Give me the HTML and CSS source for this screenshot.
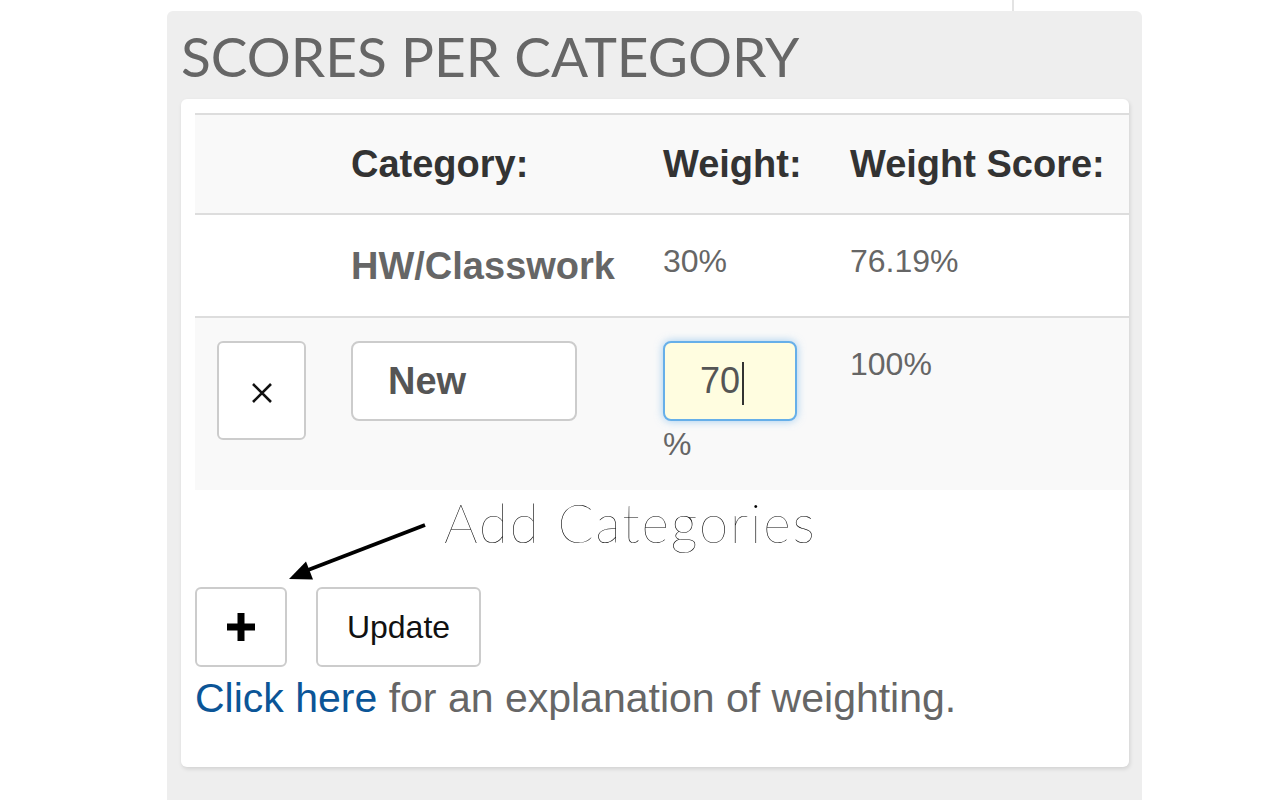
FILE: index.html
```html
<!DOCTYPE html>
<html lang="en">
<head>
<meta charset="utf-8">
<title>Scores per category</title>
<link rel="stylesheet" href="styles.css">
</head>
<body>
<div class="topbar"><div class="rule"></div></div>
<section class="panel">
  <h2 class="panel-title">SCORES PER CATEGORY</h2>
  <div class="card">
    <table class="scores">
      <colgroup><col class="c1"><col class="c2"><col class="c3"><col class="c4"></colgroup>
      <thead>
        <tr><th></th><th>Category:</th><th>Weight:</th><th>Weight Score:</th></tr>
      </thead>
      <tbody>
        <tr class="row-existing">
          <td></td>
          <th class="cat">HW/Classwork</th>
          <td>30%</td>
          <td>76.19%</td>
        </tr>
        <tr class="row-new">
          <td>
            <button class="btn btn-remove" type="button" aria-label="Remove">
              <svg width="22" height="22" viewBox="0 0 22 22"><path d="M2 2L20 20M20 2L2 20" stroke="#111" stroke-width="2.6" fill="none"/></svg>
            </button>
          </td>
          <td><div class="field field-name">New</div></td>
          <td><div class="field field-weight is-focus">70<span class="caret"></span></div><span class="unit">%</span></td>
          <td>100%</td>
        </tr>
      </tbody>
    </table>
    <div class="callout">
      <span class="callout-text">Add Categories</span>
      <svg class="callout-arrow" width="260" height="97" viewBox="0 0 260 97">
        <path d="M230 35L113 80" stroke="#000" stroke-width="4" fill="none"/>
        <path d="M94 89L111 71.5L118 89.5Z" fill="#000"/>
      </svg>
    </div>
    <div class="actions">
      <button class="btn btn-add" type="button" aria-label="Add">
        <svg width="30" height="30" viewBox="0 0 30 30"><path d="M11.5 1h7v10.5H29v7H18.5V29h-7V18.5H1v-7h10.5z" fill="#000"/></svg>
      </button>
      <button class="btn btn-update" type="button">Update</button>
    </div>
    <p class="note"><a href="#" class="note-link">Click here</a> for an explanation of weighting.</p>
  </div>
</section>
</body>
</html>
```
FILE: styles.css
```css
html, body {
  margin: 0;
  padding: 0;
  background: #fff;
  font-family: "Liberation Sans", Arial, sans-serif;
  overflow: hidden;
}

.topbar {
  height: 11px;
}
.rule {
  margin-left: 1012px;
  width: 2px;
  height: 11px;
  background: #e3e3e3;
}

.panel {
  box-sizing: border-box;
  margin-left: 167px;
  width: 975px;
  min-height: 789px;
  padding: 12px 13px 0 14px;
  background: #eeeeee;
  border-radius: 6px 6px 0 0;
}

.panel-title {
  margin: 0 0 10px;
  font-family: Lato, "Liberation Sans", sans-serif;
  font-weight: 400;
  font-size: 55px;
  line-height: 66px;
  color: #666;
}

.card {
  background: #fff;
  border-radius: 6px;
  padding: 14px 0 14px 14px;
  box-shadow: 1px 2px 4px rgba(0, 0, 0, 0.12);
  overflow: hidden;
}

.scores {
  width: 100%;
  table-layout: fixed;
  border-collapse: separate;
  border-spacing: 0;
}
.c1 { width: 156px; }
.c2 { width: 312px; }
.c3 { width: 187px; }
.c4 { width: auto; }

.scores th,
.scores td {
  padding: 0;
  text-align: left;
}

.scores thead th {
  background: #f9f9f9;
  border-top: 2px solid #dddddd;
  border-bottom: 2px solid #dddddd;
  height: 98px;
  vertical-align: middle;
  font-size: 38px;
  font-weight: 700;
  color: #333;
  line-height: 46px;
}

.row-existing td,
.row-existing th {
  border-bottom: 2px solid #dddddd;
  height: 78px;
  padding-top: 23px;
  vertical-align: top;
  font-size: 32px;
  line-height: 46px;
  color: #666;
}
.row-existing th.cat {
  vertical-align: middle;
  padding-top: 0;
  font-size: 38px;
  font-weight: 700;
  color: #666;
}

.row-new td {
  background: #f9f9f9;
  padding: 23px 0;
  vertical-align: top;
  font-size: 32px;
  line-height: 46px;
  color: #666;
}

.btn {
  box-sizing: border-box;
  border: 2px solid #cccccc;
  border-radius: 6px;
  background: #fff;
  padding: 0;
  display: flex;
  align-items: center;
  justify-content: center;
  font-family: "Liberation Sans", Arial, sans-serif;
  cursor: pointer;
}
.btn-remove {
  width: 89px;
  height: 99px;
  margin-left: 22px;
  padding-top: 4px;
}

.field {
  box-sizing: border-box;
  height: 80px;
  border: 2px solid #cccccc;
  border-radius: 8px;
  background: #fff;
  padding-left: 35px;
  line-height: 76px;
  color: #555;
}
.field-name {
  width: 226px;
  font-size: 38px;
  font-weight: 700;
}
.field-weight {
  width: 134px;
  font-size: 36px;
}
.is-focus {
  background: #fffde0;
  border-color: #66afe9;
  box-shadow: 0 0 8px rgba(102, 175, 233, 0.6);
}
.caret {
  display: inline-block;
  width: 2px;
  height: 43px;
  margin-left: 2px;
  background: #333;
  vertical-align: middle;
}
.unit {
  display: block;
}

.callout {
  position: relative;
  box-sizing: border-box;
  height: 97px;
  padding: 6px 0 0 249px;
}
.callout-text {
  font-family: Lato, "Liberation Sans", sans-serif;
  font-weight: 100;
  font-size: 53px;
  line-height: 53px;
  letter-spacing: 1.9px;
  color: #000;
}
.callout-arrow {
  position: absolute;
  left: 0;
  top: 0;
}

.actions {
  display: flex;
  gap: 29px;
}
.btn-add {
  width: 92px;
  height: 80px;
}
.btn-update {
  width: 165px;
  height: 80px;
  font-size: 32px;
  color: #111;
}

.note {
  margin: 3px 0 26px;
  font-size: 41px;
  line-height: 57px;
  color: #666;
}
.note-link {
  color: #0b5597;
  text-decoration: none;
}
```
